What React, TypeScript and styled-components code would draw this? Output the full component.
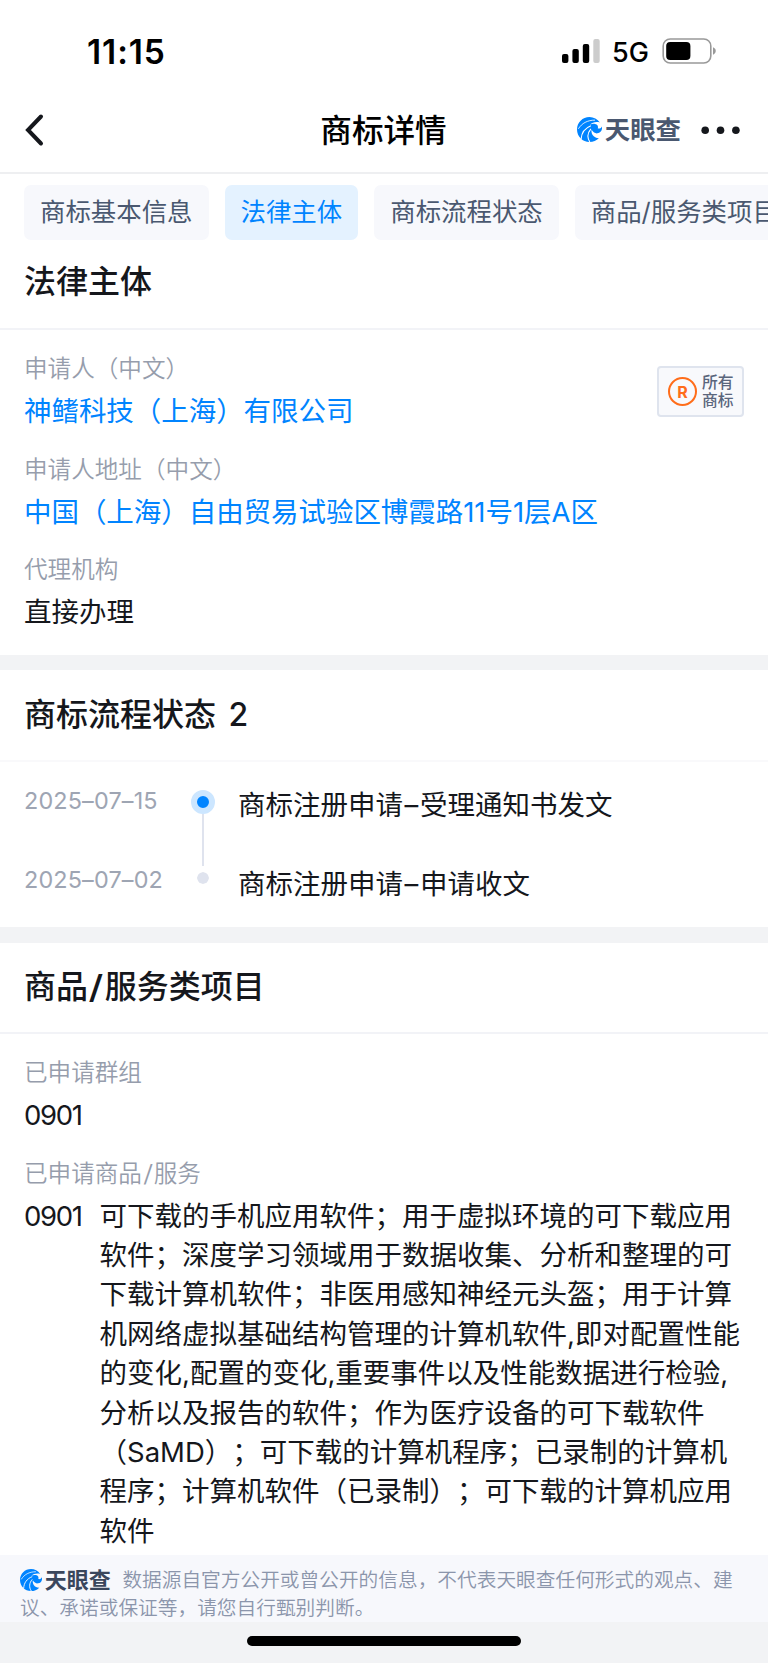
import React from "react";
import styled, { createGlobalStyle } from "styled-components";

const GlobalStyle = createGlobalStyle`
  * { box-sizing: border-box; }
  body {
    margin: 0;
    background: #fff;
    color: #15171c;
    font-family: Inter, "Noto Sans CJK SC", sans-serif;
    font-weight: 400;
    text-spacing-trim: space-all;
  }
`;

const Screen = styled.div`
  width: 768px;
  height: 1663px;
  display: flex;
  flex-direction: column;
  overflow: hidden;
  background: #fff;
`;

const StatusBar = styled.div`
  height: 88px;
  flex: none;
  display: flex;
  align-items: flex-start;
  justify-content: space-between;
  padding: 31px 50px 0 87px;
  color: #000;
`;

const Clock = styled.div`
  font-size: 33.5px;
  line-height: 42px;
  font-weight: 600;
  letter-spacing: 0.9px;
`;

const StatusIcons = styled.div`
  display: flex;
  align-items: center;
  height: 40px;
`;

const Network = styled.span`
  font-size: 27px;
  line-height: 40px;
  font-weight: 500;
  width: 50px;
  margin-left: 11px;
  white-space: nowrap;
  padding-top: 3px;
`;

const NavBar = styled.header`
  height: 86px;
  flex: none;
  display: grid;
  grid-template-columns: 1fr auto 1fr;
  align-items: center;
  padding: 0 27px 0 24px;
  border-bottom: 2px solid #eeeff1;
`;

const NavTitle = styled.h1`
  margin: 0;
  padding: 1px 0 0 2px;
  font-size: 31.6px;
  line-height: 44px;
  font-weight: 500;
  color: #000;
`;

const NavActions = styled.div`
  display: flex;
  align-items: center;
  justify-content: flex-end;
  gap: 20px;
`;

const Brand = styled.span<{ $size: number; $color: string }>`
  display: inline-flex;
  align-items: center;
  gap: ${(p) => p.$size * 0.13}px;
  font-size: ${(p) => p.$size}px;
  line-height: 1.2;
  font-weight: 700;
  color: ${(p) => p.$color};
`;

const Tabs = styled.nav`
  height: 79px;
  flex: none;
  display: flex;
  gap: 16px;
  padding: 11px 0 0 24px;
  overflow: hidden;
`;

const Tab = styled.div<{ $active?: boolean }>`
  flex: none;
  height: 55px;
  padding: 0 16px;
  border-radius: 7px;
  font-size: 25.43px;
  line-height: 53px;
  white-space: nowrap;
  background: ${(p) => (p.$active ? "#e4f2ff" : "#f7f8fc")};
  color: ${(p) => (p.$active ? "#0084ff" : "#4a5870")};
`;

const Section = styled.section`
  flex: none;
`;

const SectionTitle = styled.h2<{ $height: number; $lift: number; $line: string }>`
  margin: 0;
  height: ${(p) => p.$height}px;
  padding: 0 24px ${(p) => p.$lift}px;
  display: flex;
  align-items: center;
  border-bottom: 2px solid ${(p) => p.$line};
  font-size: 32px;
  line-height: 44px;
  font-weight: 500;
  white-space: pre;
  word-spacing: 4px;
`;

const Slash = styled.span`
  display: inline-block;
  margin: 0 0.075em;
  transform: scaleX(1.25);
`;

const Band = styled.div<{ $height: number }>`
  flex: none;
  height: ${(p) => p.$height}px;
  background: #f2f3f5;
`;

const Fields = styled.div`
  padding: 19px 24px 21px;
  display: flex;
  justify-content: space-between;
`;

const FieldList = styled.dl`
  margin: 0;
  display: flex;
  flex-direction: column;
  gap: 16.5px;
`;

const Label = styled.dt`
  font-size: 23.6px;
  line-height: 40px;
  font-weight: 350;
  color: #969dac;
`;

const Value = styled.dd<{ $link?: boolean }>`
  margin: 0;
  font-size: 27.5px;
  line-height: 44px;
  letter-spacing: ${(p) => (p.$link ? "-0.05px" : "normal")};
  color: ${(p) => (p.$link ? "#0084ff" : "#15171c")};
`;

const Code = styled.span`
  letter-spacing: -1.3px;
`;

const Badge = styled.div`
  flex: none;
  width: 87px;
  height: 51px;
  margin-top: 17px;
  padding: 0 0 0 9px;
  display: flex;
  align-items: center;
  gap: 5px;
  border: 2px solid #dfe4ee;
  border-radius: 4px;
  background: #f8f9fc;
`;

const BadgeMark = styled.div`
  width: 29px;
  height: 29px;
  border: 2.3px solid #ff6d1a;
  border-radius: 50%;
  display: flex;
  align-items: center;
  justify-content: center;
  font-size: 16px;
  line-height: 16px;
  font-weight: 700;
  color: #ff6d1a;
`;

const BadgeText = styled.div`
  font-size: 15.8px;
  line-height: 17.8px;
  font-weight: 500;
  color: #5a667c;
`;

const Timeline = styled.ol`
  margin: 0;
  padding: 14px 24px 9px;
  height: 165px;
  list-style: none;
`;

const TimelineRow = styled.li`
  height: 78.6px;
  display: grid;
  grid-template-columns: 167px 24px 1fr;
`;

const StepDate = styled.time`
  font-size: 23.4px;
  line-height: 50px;
  letter-spacing: 0.15px;
  color: #9ea5b3;
`;

const StepTrack = styled.div`
  display: flex;
  flex-direction: column;
  align-items: center;
`;

const StepDot = styled.span<{ $current?: boolean }>`
  width: 24px;
  height: 24px;
  margin-top: ${(p) => (p.$current ? 14 : 11.4)}px;
  flex: none;
  border-radius: 50%;
  border: 6px solid ${(p) => (p.$current ? "#cce6ff" : "#fff")};
  background: ${(p) => (p.$current ? "#0084ff" : "#dfe3ee")};
  background-clip: ${(p) => (p.$current ? "border-box" : "padding-box")};
`;

const StepLine = styled.span`
  width: 2px;
  height: 52px;
  flex: none;
  background: #dfe3ee;
`;

const StepText = styled.div`
  padding-left: 23px;
  font-size: 27.5px;
  line-height: 58px;
`;

const StepDash = styled.span`
  margin: 0 1.6px;
`;

const Goods = styled.div`
  display: flex;
  margin-top: 3px;
  font-size: 27.5px;
  line-height: 39.4px;
`;

const GoodsCode = styled(Code)`
  width: 75.5px;
  flex: none;
`;

const GoodsLine = styled.div`
  white-space: nowrap;
`;

const GoodsSection = styled.section`
  flex: 1 0 0;
  min-height: 0;
  overflow: hidden;
`;

const Disclaimer = styled.footer`
  flex: none;
  height: 67px;
  padding: 11px 20px 0;
  background: #f7f8fc;
  color: #8b95ab;
  font-size: 19.7px;
  line-height: 28px;
  font-weight: 350;
`;

const DisclaimerLine = styled.div`
  display: flex;
  align-items: center;
  height: 28px;
  gap: 11.5px;
  white-space: nowrap;
`;

const HomeArea = styled.div`
  flex: none;
  height: 41px;
  padding-top: 14px;
  background: #f2f3f5;
`;

const HomeIndicator = styled.div`
  width: 274px;
  height: 10px;
  margin: 0 auto;
  border-radius: 5px;
  background: #000;
`;

const BrandMark = ({ size }: { size: number }) => (
  <svg width={size} height={size} viewBox="0 0 72 72">
    <path
      fill="#0084ff"
      d="M66 16C59 6 48 0 36 0 16 0 0 16 0 36s16 36 36 36c11 0 20-4 27-11-8 0-14-3-18-9-3-5-4-10-3-15 5 8 11 11 17 10 7-1 12-6 13-13V27c-3 5-7 7-12 6 2-6-1-12-8-13-5-1-10 0-15 2 8-7 18-9 29-6z"
    />
    <path d="M4 34C14 18 30 9 52 9" fill="none" stroke="#fff" strokeWidth="2.4" />
    <path d="M12 63C13 46 22 32 40 25" fill="none" stroke="#fff" strokeWidth="3" />
    <path d="M37 72C29 60 30 46 40 34" fill="none" stroke="#fff" strokeWidth="3" />
  </svg>
);

const Signal = () => (
  <svg width="40" height="26" viewBox="0 0 40 26">
    <rect x="1" y="16" width="6.4" height="9" rx="2" />
    <rect x="11.4" y="11" width="6.4" height="14" rx="2" />
    <rect x="21.8" y="6" width="6.4" height="19" rx="2" />
    <rect x="32.3" y="1" width="6.4" height="24" rx="2" fill="#ccc" />
  </svg>
);

const Battery = () => (
  <svg width="56" height="26" viewBox="0 0 56 26">
    <rect x="1.2" y="1" width="47.6" height="24" rx="7" fill="none" stroke="#999" strokeWidth="1.6" />
    <rect x="4.2" y="4" width="24.2" height="18" rx="4" />
    <path d="M51 9.3c3.7 1.4 3.7 6 0 7.4z" fill="#999" />
  </svg>
);

const tabs = ["商标基本信息", "法律主体", "商标流程状态", "商品/服务类项目"];

const parties = [
  { label: "申请人（中文）", value: "神鳍科技（上海）有限公司", link: true },
  { label: "申请人地址（中文）", value: "中国（上海）自由贸易试验区博霞路11号1层A区", link: true },
  { label: "代理机构", value: "直接办理", link: false },
];

const steps = [
  { date: "2025–07–15", action: "商标注册申请", result: "受理通知书发文" },
  { date: "2025–07–02", action: "商标注册申请", result: "申请收文" },
];

const goods = [
  "可下载的手机应用软件；用于虚拟环境的可下载应用",
  "软件；深度学习领域用于数据收集、分析和整理的可",
  "下载计算机软件；非医用感知神经元头盔；用于计算",
  "机网络虚拟基础结构管理的计算机软件,即对配置性能",
  "的变化,配置的变化,重要事件以及性能数据进行检验,",
  "分析以及报告的软件；作为医疗设备的可下载软件",
  "（SaMD）；可下载的计算机程序；已录制的计算机",
  "程序；计算机软件（已录制）；可下载的计算机应用",
  "软件",
];

export default function App() {
  return (
    <>
      <GlobalStyle />
      <Screen lang="zh-CN">
        <StatusBar>
          <Clock>11:15</Clock>
          <StatusIcons>
            <Signal />
            <Network>5G</Network>
            <Battery />
          </StatusIcons>
        </StatusBar>
        <NavBar>
          <svg width="22" height="34" viewBox="0 0 22 34">
            <path d="M17 3.5 4 17l13 13.5" fill="none" stroke="#15171c" strokeWidth="4" strokeLinecap="round" />
          </svg>
          <NavTitle>商标详情</NavTitle>
          <NavActions>
            <Brand $size={25.4} $color="#4a5870">
              <BrandMark size={25} />
              天眼查
            </Brand>
            <svg width="40" height="10" viewBox="0 0 40 10">
              <circle cx="4.2" cy="5.3" r="3.8" fill="#15171c" />
              <circle cx="19.5" cy="5.3" r="3.8" fill="#15171c" />
              <circle cx="34.9" cy="5.3" r="3.8" fill="#15171c" />
            </svg>
          </NavActions>
        </NavBar>
        <Tabs>
          {tabs.map((name, i) => (
            <Tab key={name} $active={i === 1}>{name}</Tab>
          ))}
        </Tabs>
        <Section>
          <SectionTitle $height={77} $lift={17} $line="#f2f3f7">法律主体</SectionTitle>
          <Fields>
            <FieldList>
              {parties.map((f) => (
                <div key={f.label}>
                  <Label>{f.label}</Label>
                  <Value $link={f.link}>{f.value}</Value>
                </div>
              ))}
            </FieldList>
            <Badge>
              <BadgeMark>R</BadgeMark>
              <BadgeText>所有<br />商标</BadgeText>
            </Badge>
          </Fields>
        </Section>
        <Band $height={15} />
        <Section>
          <SectionTitle $height={92} $lift={0} $line="#f9f9fb">商标流程状态 2</SectionTitle>
          <Timeline>
            {steps.map((s, i) => (
              <TimelineRow key={s.date}>
                <StepDate>{s.date}</StepDate>
                <StepTrack>
                  <StepDot $current={i === 0} />
                  {i === 0 && <StepLine />}
                </StepTrack>
                <StepText>
                  {s.action}
                  <StepDash>–</StepDash>
                  {s.result}
                </StepText>
              </TimelineRow>
            ))}
          </Timeline>
        </Section>
        <Band $height={16} />
        <GoodsSection>
          <SectionTitle $height={91} $lift={2} $line="#f2f3f7">
            商品<Slash>/</Slash>服务类项目
          </SectionTitle>
          <Fields>
            <FieldList>
              <div>
                <Label>已申请群组</Label>
                <Value><Code>0901</Code></Value>
              </div>
              <div>
                <Label>已申请商品<Slash>/</Slash>服务</Label>
                <Goods>
                  <GoodsCode>0901</GoodsCode>
                  <div>
                    {goods.map((line) => (
                      <GoodsLine key={line}>{line}</GoodsLine>
                    ))}
                  </div>
                </Goods>
              </div>
            </FieldList>
          </Fields>
        </GoodsSection>
        <Disclaimer>
          <DisclaimerLine>
            <Brand $size={22} $color="#3a465c">
              <BrandMark size={22} />
              天眼查
            </Brand>
            数据源自官方公开或曾公开的信息，不代表天眼查任何形式的观点、建
          </DisclaimerLine>
          <DisclaimerLine>议、承诺或保证等，请您自行甄别判断。</DisclaimerLine>
        </Disclaimer>
        <HomeArea>
          <HomeIndicator />
        </HomeArea>
      </Screen>
    </>
  );
}
